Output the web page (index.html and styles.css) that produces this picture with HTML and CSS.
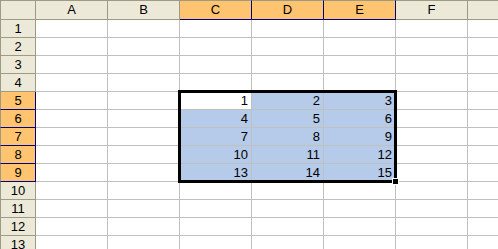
FILE: index.html
```html
<!DOCTYPE html>
<html lang="en">
<head>
 <meta charset="UTF-8">
 <title>Sheet</title>
 <link rel="stylesheet" href="styles.css">
</head>
<body>
 <div class="sheet">
  <div class="corner"></div><div class="col-head">A</div><div class="col-head">B</div><div class="col-head on">C</div><div class="col-head on">D</div><div class="col-head on">E</div><div class="col-head">F</div><div class="col-head"></div>

  <div class="row-head">1</div><div class="cell"></div><div class="cell"></div><div class="cell"></div><div class="cell"></div><div class="cell"></div><div class="cell"></div><div class="cell"></div>
  <div class="row-head">2</div><div class="cell"></div><div class="cell"></div><div class="cell"></div><div class="cell"></div><div class="cell"></div><div class="cell"></div><div class="cell"></div>
  <div class="row-head">3</div><div class="cell"></div><div class="cell"></div><div class="cell"></div><div class="cell"></div><div class="cell"></div><div class="cell"></div><div class="cell"></div>
  <div class="row-head">4</div><div class="cell"></div><div class="cell"></div><div class="cell"></div><div class="cell"></div><div class="cell"></div><div class="cell"></div><div class="cell"></div>
  <div class="row-head on">5</div><div class="cell"></div><div class="cell"></div><div class="cell">1</div><div class="cell in">2</div><div class="cell in">3</div><div class="cell"></div><div class="cell"></div>
  <div class="row-head on">6</div><div class="cell"></div><div class="cell"></div><div class="cell in">4</div><div class="cell in">5</div><div class="cell in">6</div><div class="cell"></div><div class="cell"></div>
  <div class="row-head on">7</div><div class="cell"></div><div class="cell"></div><div class="cell in">7</div><div class="cell in">8</div><div class="cell in">9</div><div class="cell"></div><div class="cell"></div>
  <div class="row-head on">8</div><div class="cell"></div><div class="cell"></div><div class="cell in">10</div><div class="cell in">11</div><div class="cell in">12</div><div class="cell"></div><div class="cell"></div>
  <div class="row-head on">9</div><div class="cell"></div><div class="cell"></div><div class="cell in">13</div><div class="cell in">14</div><div class="cell in">15</div><div class="cell"></div><div class="cell"></div>
  <div class="row-head">10</div><div class="cell"></div><div class="cell"></div><div class="cell"></div><div class="cell"></div><div class="cell"></div><div class="cell"></div><div class="cell"></div>
  <div class="row-head">11</div><div class="cell"></div><div class="cell"></div><div class="cell"></div><div class="cell"></div><div class="cell"></div><div class="cell"></div><div class="cell"></div>
  <div class="row-head">12</div><div class="cell"></div><div class="cell"></div><div class="cell"></div><div class="cell"></div><div class="cell"></div><div class="cell"></div><div class="cell"></div>
  <div class="row-head">13</div><div class="cell"></div><div class="cell"></div><div class="cell"></div><div class="cell"></div><div class="cell"></div><div class="cell"></div><div class="cell"></div>

  <!-- Selección C5:E9 -->
  <div class="selection"></div>
  <div class="handle"></div>
 </div>
</body>
</html>
```

FILE: styles.css
```css
body {
  margin: 0;
  overflow: hidden;
  background-color: white;
  font-family: 'Liberation Sans', Arial, sans-serif;
  font-size: 13px;
  color: black;
}
.sheet {
  position: relative;
  display: grid;
  grid-template-columns: 36px repeat(7, 72px);
  grid-template-rows: 20px repeat(13, 18px);
  width: 540px;
}
.sheet div {
  box-sizing: border-box;
}
.corner,
.col-head {
  background-color: #ece9d8;
  border-top: 1px solid #9d9a86;
  border-right: 1px solid #9d9a86;
  border-bottom: 1px solid #9d9a86;
  text-align: center;
  line-height: 18px;
}
.corner {
  border-left: 1px solid #9d9a86;
}
.col-head.on {
  background-color: #ffc46f;
  border-right-color: #000080;
  border-bottom-color: #000080;
}
.row-head {
  background-color: #ece9d8;
  border-left: 1px solid #9d9a86;
  border-right: 1px solid #9d9a86;
  border-bottom: 1px solid #9d9a86;
  text-align: center;
  line-height: 18px;
}
.row-head.on {
  background-color: #ffc46f;
  border-right-color: #000080;
  border-bottom-color: #000080;
}
.cell {
  border-right: 1px solid #c0c0c0;
  border-bottom: 1px solid #c0c0c0;
  text-align: right;
  padding-right: 3px;
  line-height: 18px;
}
.cell.in {
  background-color: #b6caea;
}
.selection {
  position: absolute;
  left: 178px;
  top: 90px;
  width: 219px;
  height: 93px;
  border: 3px solid black;
}
.handle {
  position: absolute;
  left: 392px;
  top: 178px;
  width: 7px;
  height: 7px;
  background-color: black;
  border: 1px solid white;
}
```
